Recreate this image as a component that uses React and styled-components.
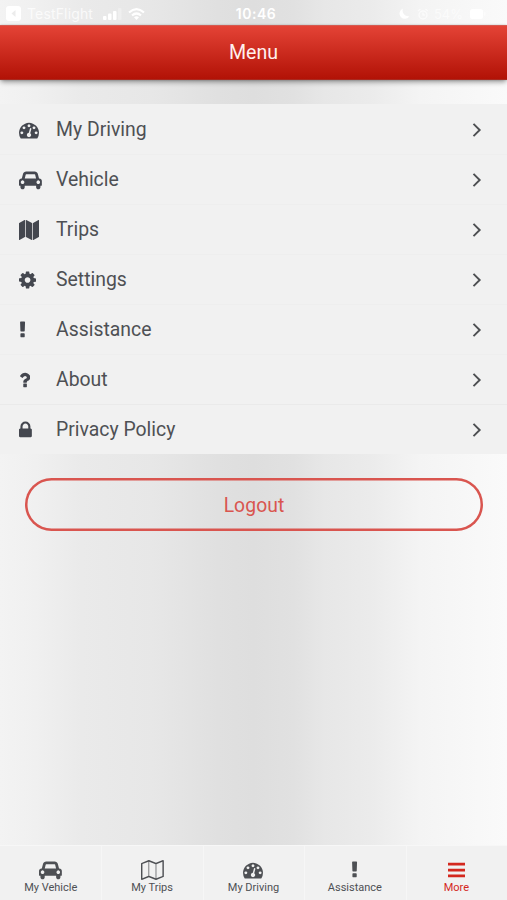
import React from "react";
import styled, { createGlobalStyle } from "styled-components";

const GlobalStyle = createGlobalStyle`
  * {
    box-sizing: border-box;
  }
  body {
    margin: 0;
    font-family: Roboto, "Liberation Sans", sans-serif;
    color: #4e5054;
  }
`;

const Screen = styled.div`
  width: 507px;
  height: 900px;
  display: flex;
  flex-direction: column;
  overflow: hidden;
  background: linear-gradient(
    90deg,
    #f3f3f3 0%,
    #f0f0f0 7%,
    #eaeaea 16%,
    #e7e7e7 30%,
    #e0e0e0 43%,
    #dedede 50%,
    #e1e1e1 58%,
    #e7e7e7 64%,
    #ebebeb 73%,
    #f4f4f4 83%,
    #fafafa 100%
  );
`;

const StatusBar = styled.div`
  height: 25px;
  flex-shrink: 0;
  display: grid;
  grid-template-columns: 1fr auto 1fr;
  align-items: center;
  padding: 2px 21px 0 6px;
  color: #fff;
  font-family: Inter, sans-serif;
  font-size: 14px;
`;

const StatusGroup = styled.div`
  display: flex;
  align-items: center;
  gap: ${(p) => p.$gap}px;
  justify-content: ${(p) => (p.$end ? "flex-end" : "flex-start")};
  opacity: ${(p) => p.$opacity || 1};
`;

const Clock = styled.div`
  font-size: 14px;
  font-weight: 600;
  letter-spacing: 0.5px;
  padding-left: 20px;
`;

const AppName = styled.span`
  font-size: 14px;
  opacity: 0.75;
  letter-spacing: 0.15px;
  margin-right: 4px;
`;

const Battery = styled.span`
  font-size: 13px;
`;

const Header = styled.header`
  height: 55px;
  flex-shrink: 0;
  display: flex;
  align-items: center;
  justify-content: center;
  padding-bottom: 1px;
  color: #fff0ee;
  font-size: 19.6px;
  background: linear-gradient(#e44336, #b21206);
  border-top: 1px solid #d55a50;
  border-bottom: 1px solid #a92a20;
  box-shadow: 0 3px 5px -1px rgba(0, 0, 0, 0.4), 0 0 2px rgba(0, 0, 0, 0.2);
`;

const List = styled.div`
  margin-top: 24px;
  padding-top: 1px;
  height: 350px;
  flex-shrink: 0;
  display: grid;
  grid-template-rows: repeat(6, 50px) 49px;
  background: #f1f1f1;
`;

const Row = styled.div`
  display: flex;
  align-items: center;
  padding: 0 25px 0 19px;
  font-size: 19.4px;
  border-bottom: 1px solid #eeeeee;
  &:nth-last-child(2) {
    border-bottom-color: #eaeaea;
  }
  &:last-child {
    border-bottom: 0;
  }
`;

const RowIcon = styled.div`
  width: 37px;
  height: 20px;
  display: flex;
  color: #44474f;
`;

const RowLabel = styled.div`
  flex: 1;
`;

const Logout = styled.button`
  height: 53px;
  flex-shrink: 0;
  margin: 24px 24px 0 25px;
  padding: 1px 0 0;
  border: 0;
  box-shadow: inset 0 0 0 2.5px #d9554f;
  border-radius: 27px;
  background: transparent;
  color: #d9554f;
  font-family: inherit;
  font-size: 19.3px;
  letter-spacing: 0.1px;
`;

const TabBar = styled.nav`
  height: 55px;
  margin-top: auto;
  flex-shrink: 0;
  display: grid;
  grid-template-columns: repeat(5, 1fr);
  background: #f1f1f1;
  border-top: 1px solid #f7f7f7;
`;

const Tab = styled.div`
  display: flex;
  flex-direction: column;
  align-items: center;
  padding-top: 14px;
  gap: 1px;
  font-size: 11px;
  line-height: 13px;
  color: ${(p) => (p.$active ? "#d4281e" : "#4e5054")};
  box-shadow: 1px 0 0 #f6f6f6;
`;

// x offset and width of each glyph on a 1792 unit tall grid
const glyphs = {
  gauge: [0, 1792, "M384 1152q0-53-37.5-90.5t-90.5-37.5-90.5 37.5-37.5 90.5 37.5 90.5 90.5 37.5 90.5-37.5 37.5-90.5zm192-448q0-53-37.5-90.5t-90.5-37.5-90.5 37.5-37.5 90.5 37.5 90.5 90.5 37.5 90.5-37.5 37.5-90.5zm428 481l101-382q6-26-7.5-48.5t-38.5-29.5-48 6.5-30 39.5l-101 382q-60 5-107 43.5t-63 98.5q-20 77 20 146t117 89 146-20 89-117q16-60-6-117t-72-91zm660-33q0-53-37.5-90.5t-90.5-37.5-90.5 37.5-37.5 90.5 37.5 90.5 90.5 37.5 90.5-37.5 37.5-90.5zm-640-640q0-53-37.5-90.5t-90.5-37.5-90.5 37.5-37.5 90.5 37.5 90.5 90.5 37.5 90.5-37.5 37.5-90.5zm448 192q0-53-37.5-90.5t-90.5-37.5-90.5 37.5-37.5 90.5 37.5 90.5 90.5 37.5 90.5-37.5 37.5-90.5zm320 448q0 261-141 483-19 29-54 29h-1402q-35 0-54-29-141-221-141-483 0-182 71-348t191-286 286-191 348-71 348 71 286 191 191 286 71 348z"],
  car: [0, 2048, "M480 1088q0-66-47-113t-113-47-113 47-47 113 47 113 113 47 113-47 47-113zm36-320h1016l-89-357q-2-8-14-17.5t-21-9.5h-768q-9 0-21 9.5t-14 17.5zm1372 320q0-66-47-113t-113-47-113 47-47 113 47 113 113 47 113-47 47-113zm160-96v384q0 14-9 23t-23 9h-96v128q0 80-56 136t-136 56-136-56-56-136v-128h-1024v128q0 80-56 136t-136 56-136-56-56-136v-128h-96q-14 0-23-9t-9-23v-384q0-93 65.5-158.5t158.5-65.5h28l105-419q23-94 104-157.5t179-63.5h768q98 0 179 63.5t104 157.5l105 419h28q93 0 158.5 65.5t65.5 158.5z"],
  map: [0, 1792, "M512 0q13 0 22.5 9.5t9.5 22.5v1472q0 20-17 28l-480 256q-7 4-15 4-13 0-22.5-9.5t-9.5-22.5v-1472q0-20 17-28l480-256q7-4 15-4zm1248 0q13 0 22.5 9.5t9.5 22.5v1472q0 20-17 28l-480 256q-7 4-15 4-13 0-22.5-9.5t-9.5-22.5v-1472q0-20 17-28l480-256q7-4 15-4zm-1120 0q8 0 14 3l512 256q18 10 18 29v1472q0 13-9.5 22.5t-22.5 9.5q-8 0-14-3l-512-256q-18-10-18-29v-1472q0-13 9.5-22.5t22.5-9.5z"],
  mapOutline: [0, 2048, "M2020 11q28 20 28 53v1408q0 20-11 36t-29 23l-640 256q-24 11-48 0l-616-246-616 246q-10 5-24 5-19 0-36-11-28-20-28-53v-1408q0-20 11-36t29-23l640-256q24-11 48 0l616 246 616-246q32-13 60 6zm-1284 135v1270l576 230v-1270zm-608 217v1270l544-217v-1270zm1792 1066v-1270l-544 217v1270z"],
  cog: [128, 1536, "M1152 896q0-106-75-181t-181-75-181 75-75 181 75 181 181 75 181-75 75-181zm512-109v222q0 12-8 23t-20 13l-185 28q-19 54-39 91 35 50 107 138 10 12 10 25t-9 23q-27 37-99 108t-94 71q-12 0-26-9l-138-108q-44 23-91 38-16 136-29 186-7 28-36 28h-222q-14 0-24.5-8.5t-11.5-21.5l-28-184q-49-16-90-37l-141 107q-10 9-25 9-14 0-25-11-126-114-165-168-7-10-7-23 0-12 8-23 15-21 51-66.5t54-70.5q-27-50-41-99l-183-27q-13-2-21-12.5t-8-23.5v-222q0-12 8-23t19-13l186-28q14-46 39-92-40-57-107-138-10-12-10-24 0-10 9-23 26-36 98.5-107.5t94.5-71.5q13 0 26 10l138 107q44-23 91-38 16-136 29-186 7-28 36-28h222q14 0 24.5 8.5t11.5 21.5l28 184q49 16 90 37l142-107q9-9 24-9 13 0 25 10 129 119 165 170 7 8 7 22 0 12-8 23-15 21-51 66.5t-54 70.5q26 50 41 98l183 28q13 2 21 12.5t8 23.5z"],
  exclamation: [576, 640, "M1088 1248v224q0 26-19 45t-45 19h-256q-26 0-45-19t-19-45v-224q0-26 19-45t45-19h256q26 0 45 19t19 45zm30-1056l-28 768q-1 26-20.5 45t-45.5 19h-256q-26 0-45.5-19t-20.5-45l-28-768q-1-26 17.5-45t44.5-19h320q26 0 44.5 19t17.5 45z"],
  question: [384, 1024, "M1088 1256v240q0 16-12 28t-28 12h-240q-16 0-28-12t-12-28v-240q0-16 12-28t28-12h240q16 0 28 12t12 28zm316-600q0 54-15.5 101t-35 76.5-55 59.5-57.5 43.5-61 35.5q-41 23-68.5 65t-27.5 67q0 17-12 32.5t-28 15.5h-240q-15 0-25.5-18.5t-10.5-37.5v-45q0-83 65-156.5t143-108.5q59-27 84-56t25-76q0-42-46.5-74t-107.5-32q-65 0-108 29-35 25-107 115-13 16-31 16-12 0-25-8l-164-125q-13-10-15.5-25t5.5-28q160-266 464-266 80 0 161 31t146 83 106 127.5 41 158.5z"],
  lock: [320, 1152, "M640 768h512v-192q0-106-75-181t-181-75-181 75-75 181v192zm832 96v576q0 40-28 68t-68 28h-960q-40 0-68-28t-28-68v-576q0-40 28-68t68-28h32v-192q0-184 132-316t316-132 316 132 132 316v192h32q40 0 68 28t28 68z"],
  bars: [128, 1536, "M128 256h1536v245h-1536zM128 780h1536v245h-1536zM128 1304h1536v245h-1536z"],
};

const Glyph = ({ name, size = 20 }) => {
  const [x, width, d] = glyphs[name];
  return (
    <svg
      width={(width / 1792) * size}
      height={size}
      viewBox={`${x} 0 ${width} 1792`}
      fill="currentColor"
    >
      <path d={d} />
    </svg>
  );
};

const Chevron = () => (
  <svg width="10" height="15" viewBox="0 0 10 15" fill="none" stroke="#4c4e51" strokeWidth="1.9">
    <path d="M1.5 1.8L7.7 8L1.5 14.2" />
  </svg>
);

const items = [
  ["gauge", "My Driving"],
  ["car", "Vehicle"],
  ["map", "Trips"],
  ["cog", "Settings"],
  ["exclamation", "Assistance"],
  ["question", "About"],
  ["lock", "Privacy Policy"],
];

const tabs = [
  ["car", "My Vehicle"],
  ["mapOutline", "My Trips"],
  ["gauge", "My Driving"],
  ["exclamation", "Assistance"],
  ["bars", "More"],
];

const App = () => {
  return (
    <Screen>
      <GlobalStyle />
      <StatusBar>
        <StatusGroup $gap={6}>
          <svg width="15" height="15" viewBox="0 0 15 15">
            <rect width="15" height="15" rx="3" fill="#fff" />
            <path d="M9.5 4L5.5 7.5L9.5 11Z" fill="#ececec" />
          </svg>
          <AppName>TestFlight</AppName>
          <svg width="19" height="12" viewBox="0 0 19 12" fill="#fff">
            <rect y="8" width="3.5" height="4" rx="1" />
            <rect x="5" y="5.5" width="3.5" height="6.5" rx="1" />
            <rect x="10" y="3" width="3.5" height="9" rx="1" />
            <rect x="15" width="3.5" height="12" rx="1" opacity="0.3" />
          </svg>
          <svg width="17" height="12" viewBox="0 0 17 12" fill="none" stroke="#fff" strokeWidth="2.2">
            <path d="M1 4.5Q8.5 -2.2 16 4.5" />
            <path d="M4 7.5Q8.5 3.5 13 7.5" />
            <path d="M8.5 12L6 9.3Q8.5 7.3 11 9.3Z" fill="#fff" stroke="none" />
          </svg>
        </StatusGroup>
        <Clock>10:46</Clock>
        <StatusGroup $gap={7} $end>
          <svg width="11" height="11" viewBox="0 0 11 11" fill="#fff">
            <path d="M4 0.5A5.3 5.3 0 1 0 10.5 8A5.6 5.6 0 0 1 4 0.5Z" />
          </svg>
          <StatusGroup $gap={5} $opacity={0.65}>
            <svg width="12" height="12" viewBox="0 0 12 12" fill="none" stroke="#fff" strokeWidth="1.4">
              <circle cx="6" cy="7" r="4" />
              <path d="M6 4.5V7H8M1 3L3.5 1M11 3L8.5 1" />
            </svg>
            <Battery>54%</Battery>
          </StatusGroup>
          <svg width="16" height="10" viewBox="0 0 16 10" fill="#fff">
            <rect width="13" height="10" rx="2.5" />
            <rect x="14" y="3" width="1.5" height="4" rx="0.7" opacity="0.5" />
          </svg>
        </StatusGroup>
      </StatusBar>
      <Header>Menu</Header>
      <List>
        {items.map(([icon, label]) => (
          <Row key={label}>
            <RowIcon>
              <Glyph name={icon} />
            </RowIcon>
            <RowLabel>{label}</RowLabel>
            <Chevron />
          </Row>
        ))}
      </List>
      <Logout>Logout</Logout>
      <TabBar>
        {tabs.map(([icon, label]) => (
          <Tab key={label} $active={label === "More"}>
            <Glyph name={icon} />
            {label}
          </Tab>
        ))}
      </TabBar>
    </Screen>
  );
};

export default App;
